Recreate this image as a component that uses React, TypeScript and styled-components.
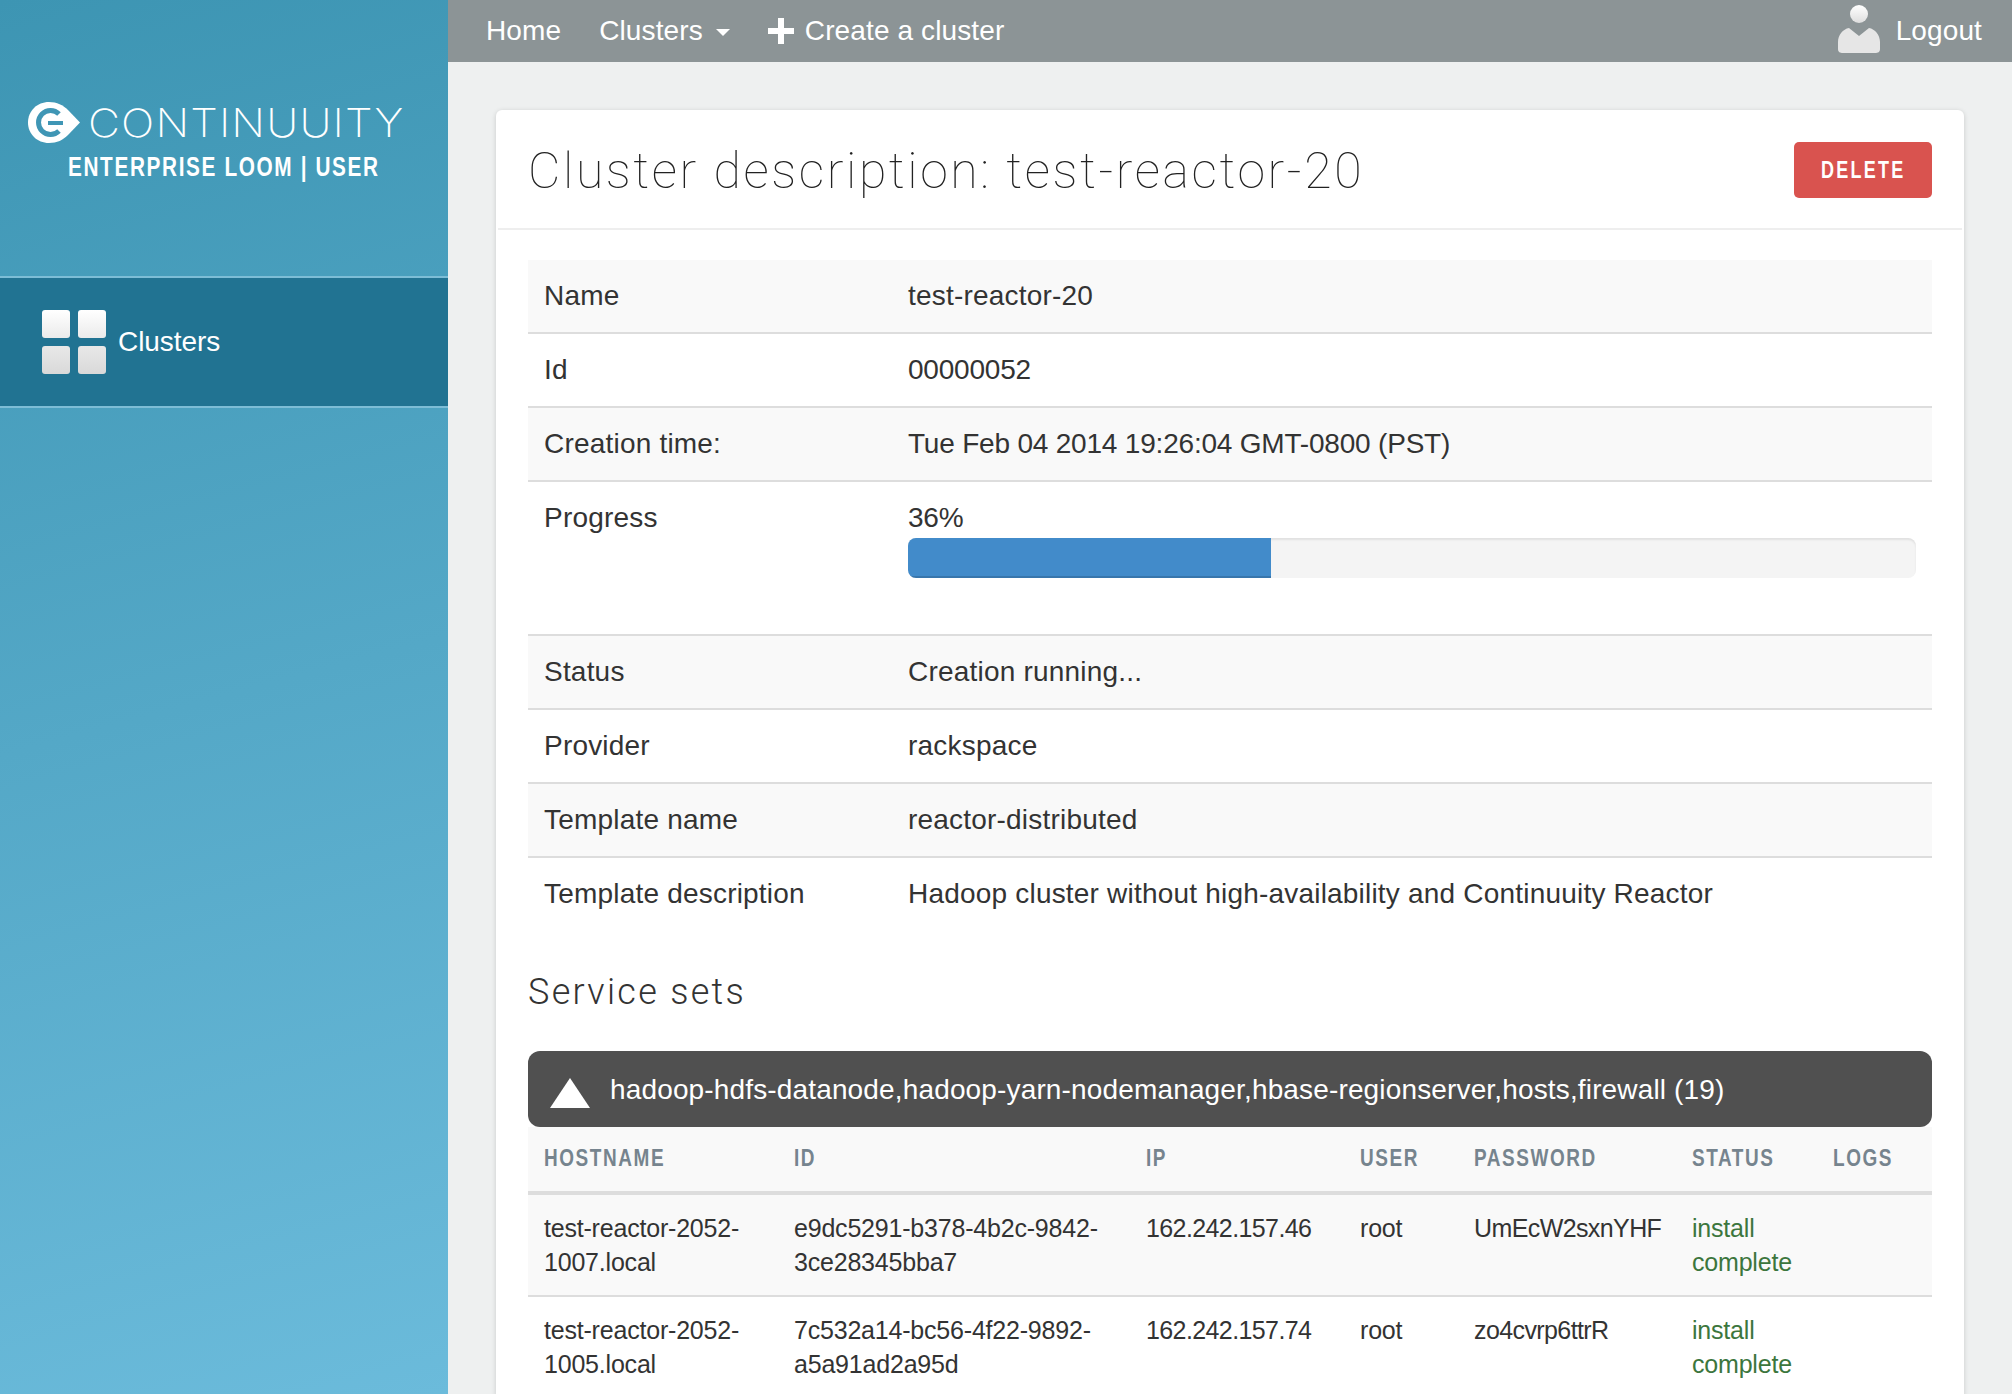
import React from "react"
import styled, { createGlobalStyle } from "styled-components"

const GlobalStyle = createGlobalStyle`
  html, body {
    margin: 0;
    padding: 0;
    height: 100%;
    overflow: hidden;
    background: #eef0f0;
    font-family: "Liberation Sans", Arial, sans-serif;
    color: #333;
  }
  * { box-sizing: border-box; }
`

const Page = styled.div`
  display: flex;
  height: 100vh;
  overflow: hidden;
`

const Sidebar = styled.aside`
  width: 448px;
  flex: none;
  background: linear-gradient(165deg, #3d95b3 0%, #6bbbdb 100%);
`

const Brand = styled.div`
  height: 276px;
  padding-top: 102px;
  color: #fff;
`

const BrandTop = styled.div`
  display: flex;
  align-items: center;
  height: 41px;
  padding-left: 28px;
`

const Wordmark = styled.span`
  display: inline-block;
  margin-left: 8px;
  font-family: Inter, "Liberation Sans", sans-serif;
  font-weight: 200;
  font-size: 39px;
  line-height: 41px;
  letter-spacing: 1px;
  white-space: nowrap;
  transform: scaleX(1.13);
  transform-origin: left center;
`

// no condensed face is installed, so the narrow labels are squeezed
const Narrow = styled.span<{ $scale: number; $center?: boolean }>`
  display: inline-block;
  white-space: nowrap;
  transform: scaleX(${(p) => p.$scale});
  transform-origin: ${(p) => (p.$center ? "center" : "left center")};
`

const BrandSub = styled.div`
  margin-top: 8px;
  padding-left: 68px;
  font-weight: 700;
  font-size: 27px;
  line-height: 32px;
  letter-spacing: 2.1px;
  white-space: nowrap;
`

const SideItem = styled.a`
  display: flex;
  align-items: center;
  height: 132px;
  padding-left: 42px;
  background: #217392;
  border-top: 2px solid #7dbdd6;
  border-bottom: 2px solid #7dbdd6;
  color: #fff;
  font-size: 28px;
  letter-spacing: -0.05px;
`

const TileGrid = styled.div`
  display: grid;
  grid-template-columns: 28px 28px;
  grid-auto-rows: 28px;
  gap: 8px;
  margin-right: 12px;
`

const Tile = styled.span<{ $low?: boolean }>`
  border-radius: 3px;
  background: ${(p) =>
    p.$low
      ? "linear-gradient(#e8e8e8, #d9d9d9)"
      : "linear-gradient(#ffffff, #ebebeb)"};
`

const Main = styled.div`
  flex: 1;
  min-width: 0;
`

const TopBar = styled.nav`
  display: flex;
  align-items: center;
  height: 62px;
  padding: 0 30px 0 38px;
  background: #8c9496;
  color: #fff;
  font-size: 28px;
  letter-spacing: 0.12px;
`

const NavLink = styled.a`
  display: flex;
  align-items: center;
  margin-right: 38px;
  white-space: nowrap;
`

const Caret = styled.span`
  width: 0;
  height: 0;
  margin-left: 13px;
  margin-top: 3px;
  border-left: 7px solid transparent;
  border-right: 7px solid transparent;
  border-top: 7px solid #fff;
`

const PlusIcon = styled.svg`
  width: 26px;
  height: 26px;
  margin-right: 11px;
`

const UserArea = styled.a`
  display: flex;
  align-items: center;
  margin-left: auto;
`

const UserIcon = styled.svg`
  width: 44px;
  height: 50px;
  margin: -6px 15px 0 0;
`

const Content = styled.main`
  padding: 48px 48px 0;
`

const Card = styled.section`
  background: #fff;
  border-radius: 6px;
  box-shadow: 0 1px 5px rgba(0, 0, 0, 0.16);
`

const CardHeader = styled.header`
  display: flex;
  align-items: center;
  justify-content: space-between;
  height: 120px;
  margin: 0 2px;
  padding: 0 30px;
  border-bottom: 2px solid #eeeeee;
`

const Title = styled.h1`
  margin: 4px 0 0;
  font-family: Roboto, "Liberation Sans", sans-serif;
  font-weight: 100;
  font-size: 50px;
  letter-spacing: 2.6px;
  color: #222;
`

const DeleteButton = styled.button`
  width: 138px;
  height: 56px;
  margin-top: 2px;
  padding: 0;
  border: 0;
  border-radius: 5px;
  background: #d9534f;
  color: #fff;
  font-family: "Liberation Sans", sans-serif;
  font-weight: 700;
  font-size: 24px;
  letter-spacing: 3px;
`

const CardBody = styled.div`
  padding: 30px 32px 0;
`

const InfoTable = styled.table`
  width: 100%;
  table-layout: fixed;
  border-collapse: collapse;
  font-size: 28px;
  line-height: 40px;
  letter-spacing: 0.2px;
`

const InfoRow = styled.tr<{ $odd?: boolean }>`
  background: ${(p) => (p.$odd ? "#f9f9f9" : "#fff")};
  border-bottom: 2px solid #dddddd;
  &:last-child {
    border-bottom: 0;
  }
`

const InfoCell = styled.td<{ $numeric?: boolean }>`
  padding: 16px;
  vertical-align: top;
  ${(p) => (p.$numeric ? "letter-spacing: -0.2px;" : "")}
`

const LabelCol = styled.col`
  width: 364px;
`

const Progress = styled.div`
  height: 40px;
  margin-bottom: 40px;
  border-radius: 8px;
  background: #f4f4f4;
  box-shadow: inset 0 2px 2px rgba(0, 0, 0, 0.08);
  overflow: hidden;
`

const ProgressBar = styled.div`
  height: 100%;
  background: #428bca;
  box-shadow: inset 0 -2px 0 rgba(0, 0, 0, 0.15);
`

const SectionTitle = styled.h2`
  margin: 37px 0 34px;
  font-family: Roboto, "Liberation Sans", sans-serif;
  font-weight: 300;
  font-size: 36px;
  line-height: 50px;
  letter-spacing: 2.3px;
  color: #333;
`

const SetHeader = styled.div`
  display: flex;
  align-items: center;
  height: 76px;
  padding: 2px 0 0 22px;
  border-radius: 12px;
  background: #505050;
  color: #fff;
  font-size: 28px;
  letter-spacing: 0.15px;
  white-space: nowrap;
`

const Triangle = styled.span`
  width: 0;
  height: 0;
  margin: 6px 20px 0 0;
  border-left: 20px solid transparent;
  border-right: 20px solid transparent;
  border-bottom: 30px solid #fff;
`

const HostTable = styled.table`
  width: 100%;
  table-layout: fixed;
  border-collapse: collapse;
  font-size: 25px;
  line-height: 34px;
  letter-spacing: -0.2px;
`

const HeadRow = styled.tr`
  background: #f9f9f9;
  height: 66px;
  border-bottom: 4px solid #dddddd;
`

const HeadCell = styled.th`
  padding: 0 16px 2px;
  text-align: left;
  font-weight: 700;
  font-size: 24px;
  letter-spacing: 2px;
  color: #76848e;
`

const HostRow = styled.tr<{ $odd?: boolean }>`
  background: ${(p) => (p.$odd ? "#f9f9f9" : "#fff")};
  border-bottom: 2px solid #dddddd;
`

const HostCell = styled.td<{ $ok?: boolean; $tight?: boolean }>`
  padding: 16px;
  vertical-align: top;
  color: ${(p) => (p.$ok ? "#3c763d" : "#333")};
  ${(p) => (p.$tight ? "letter-spacing: -0.6px;" : "")}
`

const details: [string, string, boolean?][] = [
  ["Name", "test-reactor-20"],
  ["Id", "00000052", true],
  ["Creation time:", "Tue Feb 04 2014 19:26:04 GMT-0800 (PST)", true],
]

const moreDetails: [string, string][] = [
  ["Status", "Creation running..."],
  ["Provider", "rackspace"],
  ["Template name", "reactor-distributed"],
  ["Template description", "Hadoop cluster without high-availability and Continuuity Reactor"],
]

const columns: [string, number][] = [
  ["Hostname", 250],
  ["ID", 352],
  ["IP", 214],
  ["User", 114],
  ["Password", 218],
  ["Status", 141],
  ["Logs", 115],
]

const hosts = [
  {
    name: "test-reactor-2052-1007.local",
    id: "e9dc5291-b378-4b2c-9842-3ce28345bba7",
    ip: "162.242.157.46",
    user: "root",
    password: "UmEcW2sxnYHF",
  },
  {
    name: "test-reactor-2052-1005.local",
    id: "7c532a14-bc56-4f22-9892-a5a91ad2a95d",
    ip: "162.242.157.74",
    user: "root",
    password: "zo4cvrp6ttrR",
  },
]

const progress = 36

export default function App() {
  return (
    <Page>
      <GlobalStyle />
      <Sidebar>
        <Brand>
          <BrandTop>
            <svg width="52" height="41" viewBox="0 0 52 41">
              <path d="M21 0C29 0 35 3 40 8L52 20.5L40 33C35 38 29 41 21 41C9 41 0 32 0 20.5S9 0 21 0Z" fill="#fff" />
              <path d="M31 12A12 12 0 1 0 31 29" fill="none" stroke="#3f96b5" strokeWidth="5" />
              <path d="M20 21H35" stroke="#3f96b5" strokeWidth="4" />
            </svg>
            <Wordmark>CONTINUUITY</Wordmark>
          </BrandTop>
          <BrandSub>
            <Narrow $scale={0.77}>ENTERPRISE LOOM | USER</Narrow>
          </BrandSub>
        </Brand>
        <SideItem>
          <TileGrid>
            <Tile />
            <Tile />
            <Tile $low />
            <Tile $low />
          </TileGrid>
          Clusters
        </SideItem>
      </Sidebar>
      <Main>
        <TopBar>
          <NavLink>Home</NavLink>
          <NavLink>
            Clusters
            <Caret />
          </NavLink>
          <NavLink>
            <PlusIcon viewBox="0 0 26 26">
              <path d="M10 0h6v10h10v6H16v10h-6V16H0v-6h10z" fill="#fff" />
            </PlusIcon>
            Create a cluster
          </NavLink>
          <UserArea>
            <UserIcon viewBox="0 0 44 50">
              <defs>
                <linearGradient id="userFill" x1="0" y1="0" x2="0" y2="1">
                  <stop offset="0" stopColor="#ffffff" />
                  <stop offset="1" stopColor="#dedede" />
                </linearGradient>
              </defs>
              <circle cx="22" cy="11" r="9" fill="url(#userFill)" />
              <path
                d="M12 25L22 33L32 25C38 26 43 32 43 39V46C43 49 41 50 38 50H6C3 50 1 49 1 46V39C1 32 6 26 12 25Z"
                fill="#e6e6e6"
              />
            </UserIcon>
            Logout
          </UserArea>
        </TopBar>
        <Content>
          <Card>
            <CardHeader>
              <Title>Cluster description: test-reactor-20</Title>
              <DeleteButton>
                <Narrow $scale={0.75} $center>DELETE</Narrow>
              </DeleteButton>
            </CardHeader>
            <CardBody>
              <InfoTable>
                <colgroup>
                  <LabelCol />
                  <col />
                </colgroup>
                <tbody>
                  {details.map(([label, value, numeric], i) => (
                    <InfoRow key={label} $odd={i % 2 === 0}>
                      <InfoCell>{label}</InfoCell>
                      <InfoCell $numeric={numeric}>{value}</InfoCell>
                    </InfoRow>
                  ))}
                  <InfoRow>
                    <InfoCell>Progress</InfoCell>
                    <InfoCell $numeric>
                      {progress}%
                      <Progress>
                        <ProgressBar style={{ width: `${progress}%` }} />
                      </Progress>
                    </InfoCell>
                  </InfoRow>
                  {moreDetails.map(([label, value], i) => (
                    <InfoRow key={label} $odd={i % 2 === 0}>
                      <InfoCell>{label}</InfoCell>
                      <InfoCell>{value}</InfoCell>
                    </InfoRow>
                  ))}
                </tbody>
              </InfoTable>
              <SectionTitle>Service sets</SectionTitle>
              <SetHeader>
                <Triangle />
                hadoop-hdfs-datanode,hadoop-yarn-nodemanager,hbase-regionserver,hosts,firewall (19)
              </SetHeader>
              <HostTable>
                <colgroup>
                  {columns.map(([name, w]) => (
                    <col key={name} width={w} />
                  ))}
                </colgroup>
                <thead>
                  <HeadRow>
                    {columns.map(([name]) => (
                      <HeadCell key={name}>
                        <Narrow $scale={0.79}>{name.toUpperCase()}</Narrow>
                      </HeadCell>
                    ))}
                  </HeadRow>
                </thead>
                <tbody>
                  {hosts.map((h, i) => (
                    <HostRow key={h.name} $odd={i % 2 === 0}>
                      <HostCell>{h.name}</HostCell>
                      <HostCell>{h.id}</HostCell>
                      <HostCell $tight>{h.ip}</HostCell>
                      <HostCell>{h.user}</HostCell>
                      <HostCell $tight>{h.password}</HostCell>
                      <HostCell $ok>install complete</HostCell>
                      <HostCell />
                    </HostRow>
                  ))}
                </tbody>
              </HostTable>
            </CardBody>
          </Card>
        </Content>
      </Main>
    </Page>
  )
}
